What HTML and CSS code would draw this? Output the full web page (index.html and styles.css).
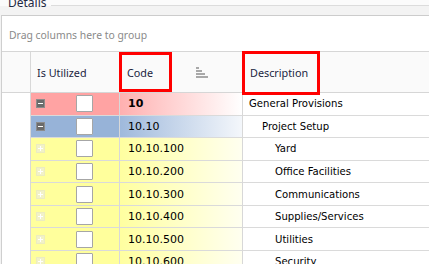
FILE: index.html
```html
<!DOCTYPE html>
<html>
<head>
<meta charset="utf-8">
<link rel="stylesheet" href="styles.css">
</head>
<body>
<div class="groupbox">
  <div class="gb-caption"><span class="gb-title">Details</span><span class="gb-line"></span></div>
  <div class="gb-body">
    <div class="grid">
      <div class="group-panel">Drag columns here to group</div>
      <div class="row header">
        <div class="cell ind"></div>
        <div class="cell util">Is Utilized</div>
        <div class="cell code">Code
          <svg class="sort" width="13" height="12" viewBox="0 0 13 12"><rect x="0" y="0" width="3" height="2" fill="#a8a8a8"/><rect x="0" y="3" width="6" height="2" fill="#a8a8a8"/><rect x="0" y="6" width="9" height="2" fill="#a8a8a8"/><rect x="0" y="9" width="12" height="2" fill="#a8a8a8"/></svg>
          <span class="hl hl-code"></span>
        </div>
        <div class="cell desc">Description<span class="hl hl-desc"></span></div>
      </div>
      <div class="rows">
        <div class="row r-pink">
          <div class="cell ind"></div>
          <div class="cell util"><svg class="exp" width="9" height="9" viewBox="0 0 9 9"><rect x="0.5" y="0.5" width="8" height="8" fill="#6b6b6b" stroke="#8c8c8c"/><rect x="2" y="4" width="5" height="1" fill="#fff"/></svg><span class="chk"></span></div>
          <div class="cell code bold">10</div>
          <div class="cell desc">General Provisions</div>
        </div>
        <div class="row r-blue">
          <div class="cell ind"></div>
          <div class="cell util"><svg class="exp" width="9" height="9" viewBox="0 0 9 9"><rect x="0.5" y="0.5" width="8" height="8" fill="#6b6b6b" stroke="#8c8c8c"/><rect x="2" y="4" width="5" height="1" fill="#fff"/></svg><span class="chk"></span></div>
          <div class="cell code">10.10</div>
          <div class="cell desc l1">Project Setup</div>
        </div>
        <div class="row r-yel">
          <div class="cell ind"></div>
          <div class="cell util"><svg class="exp" width="9" height="9" viewBox="0 0 9 9"><rect x="0.5" y="0.5" width="8" height="8" fill="#f2f2c8" stroke="#ececc0"/><rect x="2" y="4" width="5" height="1" fill="#fff"/><rect x="4" y="2" width="1" height="5" fill="#fff"/></svg><span class="chk"></span></div>
          <div class="cell code">10.10.100</div>
          <div class="cell desc l2">Yard</div>
        </div>
        <div class="row r-yel">
          <div class="cell ind"></div>
          <div class="cell util"><svg class="exp" width="9" height="9" viewBox="0 0 9 9"><rect x="0.5" y="0.5" width="8" height="8" fill="#f2f2c8" stroke="#ececc0"/><rect x="2" y="4" width="5" height="1" fill="#fff"/><rect x="4" y="2" width="1" height="5" fill="#fff"/></svg><span class="chk"></span></div>
          <div class="cell code">10.10.200</div>
          <div class="cell desc l2">Office Facilities</div>
        </div>
        <div class="row r-yel">
          <div class="cell ind"></div>
          <div class="cell util"><svg class="exp" width="9" height="9" viewBox="0 0 9 9"><rect x="0.5" y="0.5" width="8" height="8" fill="#f2f2c8" stroke="#ececc0"/><rect x="2" y="4" width="5" height="1" fill="#fff"/><rect x="4" y="2" width="1" height="5" fill="#fff"/></svg><span class="chk"></span></div>
          <div class="cell code">10.10.300</div>
          <div class="cell desc l2">Communications</div>
        </div>
        <div class="row r-yel">
          <div class="cell ind"></div>
          <div class="cell util"><svg class="exp" width="9" height="9" viewBox="0 0 9 9"><rect x="0.5" y="0.5" width="8" height="8" fill="#f2f2c8" stroke="#ececc0"/><rect x="2" y="4" width="5" height="1" fill="#fff"/><rect x="4" y="2" width="1" height="5" fill="#fff"/></svg><span class="chk"></span></div>
          <div class="cell code">10.10.400</div>
          <div class="cell desc l2">Supplies/Services</div>
        </div>
        <div class="row r-yel">
          <div class="cell ind"></div>
          <div class="cell util"><svg class="exp" width="9" height="9" viewBox="0 0 9 9"><rect x="0.5" y="0.5" width="8" height="8" fill="#f2f2c8" stroke="#ececc0"/><rect x="2" y="4" width="5" height="1" fill="#fff"/><rect x="4" y="2" width="1" height="5" fill="#fff"/></svg><span class="chk"></span></div>
          <div class="cell code">10.10.500</div>
          <div class="cell desc l2">Utilities</div>
        </div>
        <div class="row r-yel">
          <div class="cell ind"></div>
          <div class="cell util"><svg class="exp" width="9" height="9" viewBox="0 0 9 9"><rect x="0.5" y="0.5" width="8" height="8" fill="#f2f2c8" stroke="#ececc0"/><rect x="2" y="4" width="5" height="1" fill="#fff"/><rect x="4" y="2" width="1" height="5" fill="#fff"/></svg><span class="chk"></span></div>
          <div class="cell code">10.10.600</div>
          <div class="cell desc l2">Security</div>
        </div>
      </div>
    </div>
  </div>
</div>
</body>
</html>
```
FILE: styles.css
```css
html, body {
  margin: 0;
  padding: 0;
  background: #fbfbfb;
  overflow: hidden;
  width: 429px;
  height: 264px;
}
body {
  font-family: "DejaVu Sans", sans-serif;
  font-size: 11px;
  color: #000;
}
.groupbox {
  width: 460px;
}
.gb-caption {
  height: 6px;
  display: flex;
  align-items: flex-end;
}
.gb-title {
  font-family: "Noto Sans", sans-serif;
  font-size: 12px;
  line-height: 12px;
  color: #1f2a44;
  margin-left: 8px;
  margin-top: -3px;
  align-self: flex-start;
  padding-right: 4px;
}
.gb-line {
  flex: 1;
  height: 1px;
  background: #dcdcdc;
}
.gb-body {
  background: #f3f3f3;
  padding-top: 9px;
}
.grid {
  margin-left: 1px;
  border-left: 1px solid #cfcfcf;
  border-top: 1px solid #cccccc;
  background: #fff;
  height: 300px;
}
.group-panel {
  height: 36px;
  box-sizing: border-box;
  border-bottom: 1px solid #d6d6d6;
  display: flex;
  align-items: center;
  padding-left: 7px;
  padding-top: 2px;
  color: #8a8a8a;
  font-family: "Noto Sans", sans-serif;
  font-size: 10.4px;
}
.row {
  display: grid;
  grid-template-columns: 29px 89px 123px 1fr;
  height: 22.57px;
}
.cell {
  box-sizing: border-box;
  border-right: 1px solid #d8d8d8;
  border-bottom: 1px solid #dadada;
  display: flex;
  align-items: center;
  white-space: nowrap;
}
.row .ind {
  border-bottom: none;
  background: #fff;
}
.header {
  height: 41px;
  background: #fafafa;
}
.header .cell {
  border-bottom: 1px solid #d6d6d6;
  position: relative;
  color: #22253f;
  font-family: "Noto Sans", sans-serif;
  font-size: 10.8px;
}
.header .ind {
  border-bottom: 1px solid #d6d6d6;
  background: #fafafa;
}
.header .util { padding-left: 6px; }
.header .code { padding-left: 7px; }
.header .desc { padding-left: 7px; border-right: none; }
.sort {
  margin-left: auto;
  margin-right: 33px;
  margin-top: 1px;
}
.hl {
  position: absolute;
  border: 3px solid #ff0000;
  box-sizing: border-box;
  pointer-events: none;
}
.hl-code {
  left: -1px;
  top: 0;
  width: 53px;
  height: 40px;
}
.hl-desc {
  left: -1px;
  top: -1px;
  width: 78px;
  height: 44px;
  z-index: 2;
}
.rows .code {
  padding-left: 8px;
}
.rows .desc {
  padding-left: 6px;
  background: #fff;
  border-right: none;
  font-size: 10.1px;
}
.rows .desc.l1 { padding-left: 19px; }
.rows .desc.l2 { padding-left: 32px; }
.bold { font-weight: bold; }
.util .exp {
  margin-left: 5px;
  flex: none;
}
.chk {
  width: 17px;
  height: 17px;
  box-sizing: border-box;
  border: 1px solid #a6a6a6;
  background: #fff;
  margin-left: 31px;
  border-radius: 1px;
  flex: none;
}
.r-pink .util { background: #ffa3a3; }
.r-pink .code { background: linear-gradient(to right, #ffb0b0, #ffffff); }
.r-blue .util { background: #97b3d8; }
.r-blue .code { background: linear-gradient(to right, #9fb9dc, #f4f7fb); }
.r-yel .util { background: #ffff9c; }
.r-yel .code { background: linear-gradient(to right, #ffffa0, #fffff0); }
```
